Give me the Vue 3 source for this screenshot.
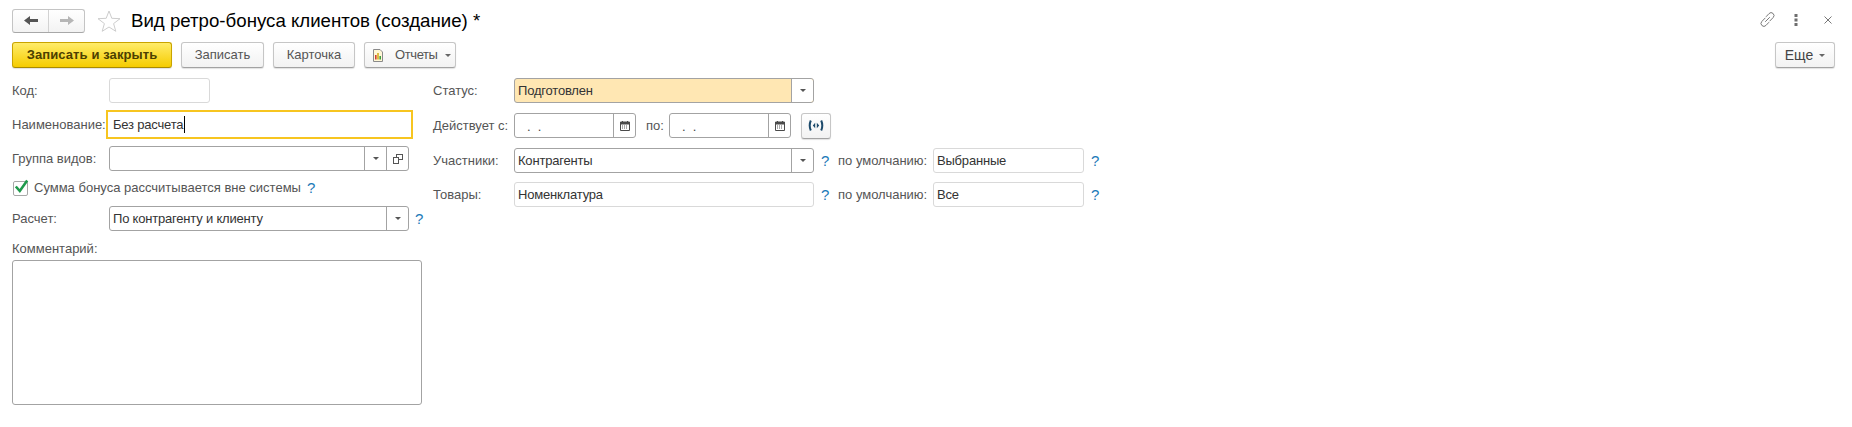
<script setup>
const title = "Вид ретро-бонуса клиентов (создание) *"
</script>

<template>
  <div class="page">
    <header class="head">
      <div class="nav">
        <button class="nav-btn">
          <svg width="14" height="9" viewBox="0 0 14 9"><path d="M0 4.5 L6 0 V3 H14 V6 H6 V9 Z" fill="#555"/></svg>
        </button>
        <button class="nav-btn last">
          <svg width="14" height="9" viewBox="0 0 14 9"><path d="M14 4.5 L8 0 V3 H0 V6 H8 V9 Z" fill="#b6b6b6"/></svg>
        </button>
      </div>
      <svg class="star" width="24" height="22" viewBox="0 0 24 22"><path d="M12 1 L14.8 8.3 L23 8.7 L16.6 13.6 L18.8 21.3 L12 17 L5.2 21.3 L7.4 13.6 L1 8.7 L9.2 8.3 Z" fill="#fff" stroke="#cdcdcd" stroke-width="1"/></svg>
      <h1 class="title">{{ title }}</h1>
      <div class="head-icons">
        <svg width="17" height="17" viewBox="0 0 17 17" fill="none" stroke="#7a7a7a" stroke-width="1"><path d="M7 5.8 L10 2.6 a2.8 2.8 0 0 1 4.2 3.9 L10.6 10.2"/><path d="M10 11.2 L7 14.4 a2.8 2.8 0 0 1 -4.2 -3.9 L6.4 6.8"/><path d="M6.2 10.8 L10.8 6.2"/></svg>
        <svg class="dots" width="4" height="12" viewBox="0 0 4 12"><rect x="0.5" y="0" width="3" height="3" fill="#6e6e6e"/><rect x="0.5" y="4.5" width="3" height="3" fill="#6e6e6e"/><rect x="0.5" y="9" width="3" height="3" fill="#6e6e6e"/></svg>
        <svg class="close" width="8" height="8" viewBox="0 0 8 8" stroke="#777" stroke-width="1"><path d="M0.5 0.5 L7.5 7.5 M7.5 0.5 L0.5 7.5"/></svg>
      </div>
    </header>

    <div class="toolbar">
      <button class="btn primary">Записать и закрыть</button>
      <button class="btn w83">Записать</button>
      <button class="btn w82">Карточка</button>
      <button class="btn w92">
        <svg class="rep" width="10" height="13" viewBox="0 0 10 13"><path d="M0.5 0.5 H7 L9.5 3 V12.5 H0.5 Z" fill="#fff7d6" stroke="#8a8a8a"/><rect x="2" y="6" width="1.6" height="4.5" fill="#d0402f"/><rect x="4.2" y="4" width="1.6" height="6.5" fill="#d8b020"/><rect x="6.4" y="7" width="1.6" height="3.5" fill="#3d9d3d"/></svg>
        <span class="rep-text">Отчеты</span><i class="caret"></i>
      </button>
      <button class="btn more">Еще<i class="caret"></i></button>
    </div>

    <div class="columns">
      <section class="left">
        <div class="row r-kod">
          <label class="lbl">Код:</label>
          <div class="field light kod"></div>
        </div>
        <div class="row r-name">
          <label class="lbl name-lbl">Наименование:</label>
          <div class="field focus"><span class="tight">Без расчета</span><i class="cursor"></i></div>
        </div>
        <div class="row r-group">
          <label class="lbl">Группа видов:</label>
          <div class="field w300">
            <span class="val"></span>
            <span class="cell"><i class="tri"></i></span>
            <span class="cell">
              <svg width="10" height="10" viewBox="0 0 10 10" fill="#fff" stroke="#555"><rect x="3.5" y="0.5" width="6" height="5"/><rect x="0.5" y="3.5" width="5" height="6"/></svg>
            </span>
          </div>
        </div>
        <div class="check-row">
          <span class="check">
            <svg width="15" height="15" viewBox="0 0 15 15"><path d="M1.8 7.5 L5.8 12 L13.2 1.6" fill="none" stroke="#1f9a4c" stroke-width="2.6"/></svg>
          </span>
          <span class="lbl-plain">Сумма бонуса рассчитывается вне системы</span>
          <span class="q">?</span>
        </div>
        <div class="row r-calc">
          <label class="lbl">Расчет:</label>
          <div class="field w300">
            <span class="val">По контрагенту и клиенту</span>
            <span class="cell"><i class="tri"></i></span>
          </div>
          <span class="q qc">?</span>
        </div>
        <label class="lbl comment-lbl">Комментарий:</label>
        <div class="textarea"></div>
      </section>

      <section class="right">
        <div class="row rr">
          <label class="lbl2">Статус:</label>
          <div class="field w300 status">
            <span class="val">Подготовлен</span>
            <span class="cell"><i class="tri"></i></span>
          </div>
        </div>
        <div class="row rr">
          <label class="lbl2">Действует с:</label>
          <div class="field date">
            <span class="val dots-val">.&nbsp;&nbsp;.</span>
            <span class="cell">
              <svg width="10" height="10" viewBox="0 0 10 10"><path d="M0.5 1 H9.5 V9.5 H0.5 Z" fill="#fff" stroke="#4a4a4a"/><rect x="0" y="1" width="10" height="2.5" fill="#4a4a4a"/><path d="M2.5 0 V1.5 M7.5 0 V1.5" stroke="#4a4a4a"/><path d="M2 5 H8 M2 7 H8" stroke="#555" stroke-dasharray="1 1"/></svg>
            </span>
          </div>
          <label class="po">по:</label>
          <div class="field date">
            <span class="val dots-val">.&nbsp;&nbsp;.</span>
            <span class="cell">
              <svg width="10" height="10" viewBox="0 0 10 10"><path d="M0.5 1 H9.5 V9.5 H0.5 Z" fill="#fff" stroke="#4a4a4a"/><rect x="0" y="1" width="10" height="2.5" fill="#4a4a4a"/><path d="M2.5 0 V1.5 M7.5 0 V1.5" stroke="#4a4a4a"/><path d="M2 5 H8 M2 7 H8" stroke="#555" stroke-dasharray="1 1"/></svg>
            </span>
          </div>
          <button class="btn period">
            <svg width="16" height="11" viewBox="0 0 16 11" fill="none" stroke="#1c4a6b" stroke-width="2"><path d="M2.8 0.5 Q0.6 5.5 2.8 10.5"/><path d="M13.2 0.5 Q15.4 5.5 13.2 10.5"/><path d="M7.2 2.8 L4.8 5.5 L7.2 8.2 Z M8.8 2.8 L11.2 5.5 L8.8 8.2 Z" fill="#1c4a6b" stroke="none"/></svg>
          </button>
        </div>
        <div class="row rr">
          <label class="lbl2">Участники:</label>
          <div class="field w300">
            <span class="val">Контрагенты</span>
            <span class="cell"><i class="tri"></i></span>
          </div>
          <span class="q q2">?</span>
          <label class="def">по умолчанию:</label>
          <div class="field light def-f"><span class="val">Выбранные</span></div>
          <span class="q q3">?</span>
        </div>
        <div class="row rr">
          <label class="lbl2">Товары:</label>
          <div class="field w300 light"><span class="val">Номенклатура</span></div>
          <span class="q q2">?</span>
          <label class="def">по умолчанию:</label>
          <div class="field light def-f"><span class="val">Все</span></div>
          <span class="q q3">?</span>
        </div>
      </section>
    </div>
  </div>
</template>

<style>
html, body { margin: 0; background: #fff; }
</style>

<style scoped>
.page {
  width: 1852px;
  height: 427px;
  overflow: hidden;
  box-sizing: border-box;
  padding: 8px 0 0 12px;
  font: 13px/16px "Liberation Sans", Arial, sans-serif;
  color: #555;
  background: #fff;
}
.head { display: flex; align-items: center; height: 25px; }
.nav {
  display: flex; width: 73px; height: 24px; box-sizing: border-box;
  border: 1px solid #c4c4c4; border-bottom-color: #a8a8a8; border-radius: 3px;
  background: linear-gradient(#fff, #f3f3f3);
}
.nav-btn {
  flex: 1; padding: 0; border: 0; background: none;
  border-right: 1px solid #d2d2d2;
  display: flex; align-items: center; justify-content: center;
}
.nav-btn.last { border-right: 0; }
.star { margin-left: 12px; }
.title {
  margin: 0 0 0 10px; font-size: 18.67px; line-height: 24px; font-weight: 400; color: #000;
}
.head-icons { margin-left: auto; margin-right: 20px; margin-bottom: 2px; display: flex; align-items: center; }
.dots { margin-left: 18px; }
.close { margin-left: 26px; }

.toolbar { display: flex; margin-top: 9px; gap: 9px; padding-right: 17px; }
.btn {
  height: 26px; box-sizing: border-box; padding: 0;
  display: flex; align-items: center; justify-content: center;
  font: 13px/16px "Liberation Sans", Arial, sans-serif; color: #555;
  border: 1px solid #c6c6c6; border-bottom-color: #a2a2a2; border-radius: 3px;
  background: linear-gradient(#fff, #f2f2f2);
  box-shadow: 0 1px 1px rgba(0,0,0,.12);
}
.primary {
  width: 160px; font-weight: 700; color: #4c4000; letter-spacing: .1px;
  border: 1px solid #c9a400; border-bottom-color: #a98b00;
  background: linear-gradient(#ffec6a, #f5cc00);
}
.w83 { width: 83px; }
.w82 { width: 82px; }
.w92 { width: 92px; justify-content: flex-start; padding-left: 8px; }
.rep { margin-right: 12px; flex: none; }
.rep-text { letter-spacing: -.4px; }
.caret {
  display: inline-block; margin-left: 7px; width: 0; height: 0; flex: none;
  border: 3px solid transparent; border-top: 3px solid #666; border-bottom: 0;
}
.more { margin-left: auto; width: 60px; color: #444; font-size: 14px; }
.more .caret { margin-left: 6px; }

.columns { display: flex; margin-top: 10px; }
.left { width: 421px; flex: none; }

.row { display: flex; align-items: center; }
.lbl { width: 97px; flex: none; white-space: nowrap; }
.name-lbl { width: 94px; }
.lbl2 { width: 81px; flex: none; white-space: nowrap; }
.lbl-plain { white-space: nowrap; }
.r-kod { height: 25px; }
.r-name { height: 29px; margin-top: 7px; }
.r-group { height: 25px; margin-top: 7px; }
.r-calc { height: 25px; margin-top: 10px; }
.rr { height: 25px; margin-bottom: 10px; }
.rr:nth-child(3) { margin-bottom: 9px; }

.field {
  height: 25px; box-sizing: border-box; display: flex; align-items: stretch;
  border: 1px solid #a3a3a3; border-radius: 3px; background: #fff; color: #333;
}
.light { border-color: #d9d9d9; }
.kod { width: 101px; }
.w300 { width: 300px; }
.focus {
  width: 307px; height: 29px; border: 2px solid #f7c520; border-radius: 0;
  padding-left: 5px; align-items: center;
}
.tight { letter-spacing: -.2px; }
.cursor { width: 1px; height: 17px; background: #000; margin-left: 1px; }
.val { flex: 1; padding-left: 3px; line-height: 23px; min-width: 0; white-space: nowrap; letter-spacing: -.2px; }
.cell {
  width: 21px; flex: none; border-left: 1px solid #a3a3a3;
  display: flex; align-items: center; justify-content: center;
}
.tri {
  width: 0; height: 0; border: 3px solid transparent; border-top: 3px solid #555; border-bottom: 0;
}
.status { background: #ffe7b3; }
.status .cell { background: #fff; border-radius: 0 3px 3px 0; }
.date { width: 122px; }
.dots-val { padding-left: 12px; color: #444; line-height: 26px; letter-spacing: 0; opacity: .99; }
.cell svg { display: block; }
.po { margin-left: 10px; width: 23px; }
.period { width: 30px; margin-left: 10px; }

.check-row { display: flex; align-items: center; height: 16px; margin-top: 9px; }
.check {
  width: 15px; height: 15px; box-sizing: border-box; margin-left: 1px; margin-right: 6px;
  border: 1px solid #a8a8a8; border-radius: 2px; background: #fff;
  display: flex; justify-content: center; align-items: center;
}
.check svg { margin-top: -4px; margin-left: 1px; flex: none; }
.q { color: #1b7ab8; font-size: 15px; margin-left: 6px; }
.qc { margin-left: 6px; }
.comment-lbl { display: block; margin-top: 10px; height: 16px; width: auto; }
.textarea {
  width: 410px; height: 145px; box-sizing: border-box; margin-top: 3px;
  border: 1px solid #a3a3a3; border-radius: 3px;
}
.q2 { margin-left: 7px; width: 9px; }
.def { margin-left: 8px; width: 95px; flex: none; white-space: nowrap; }
.def-f { width: 151px; }
.q3 { margin-left: 7px; }
</style>
